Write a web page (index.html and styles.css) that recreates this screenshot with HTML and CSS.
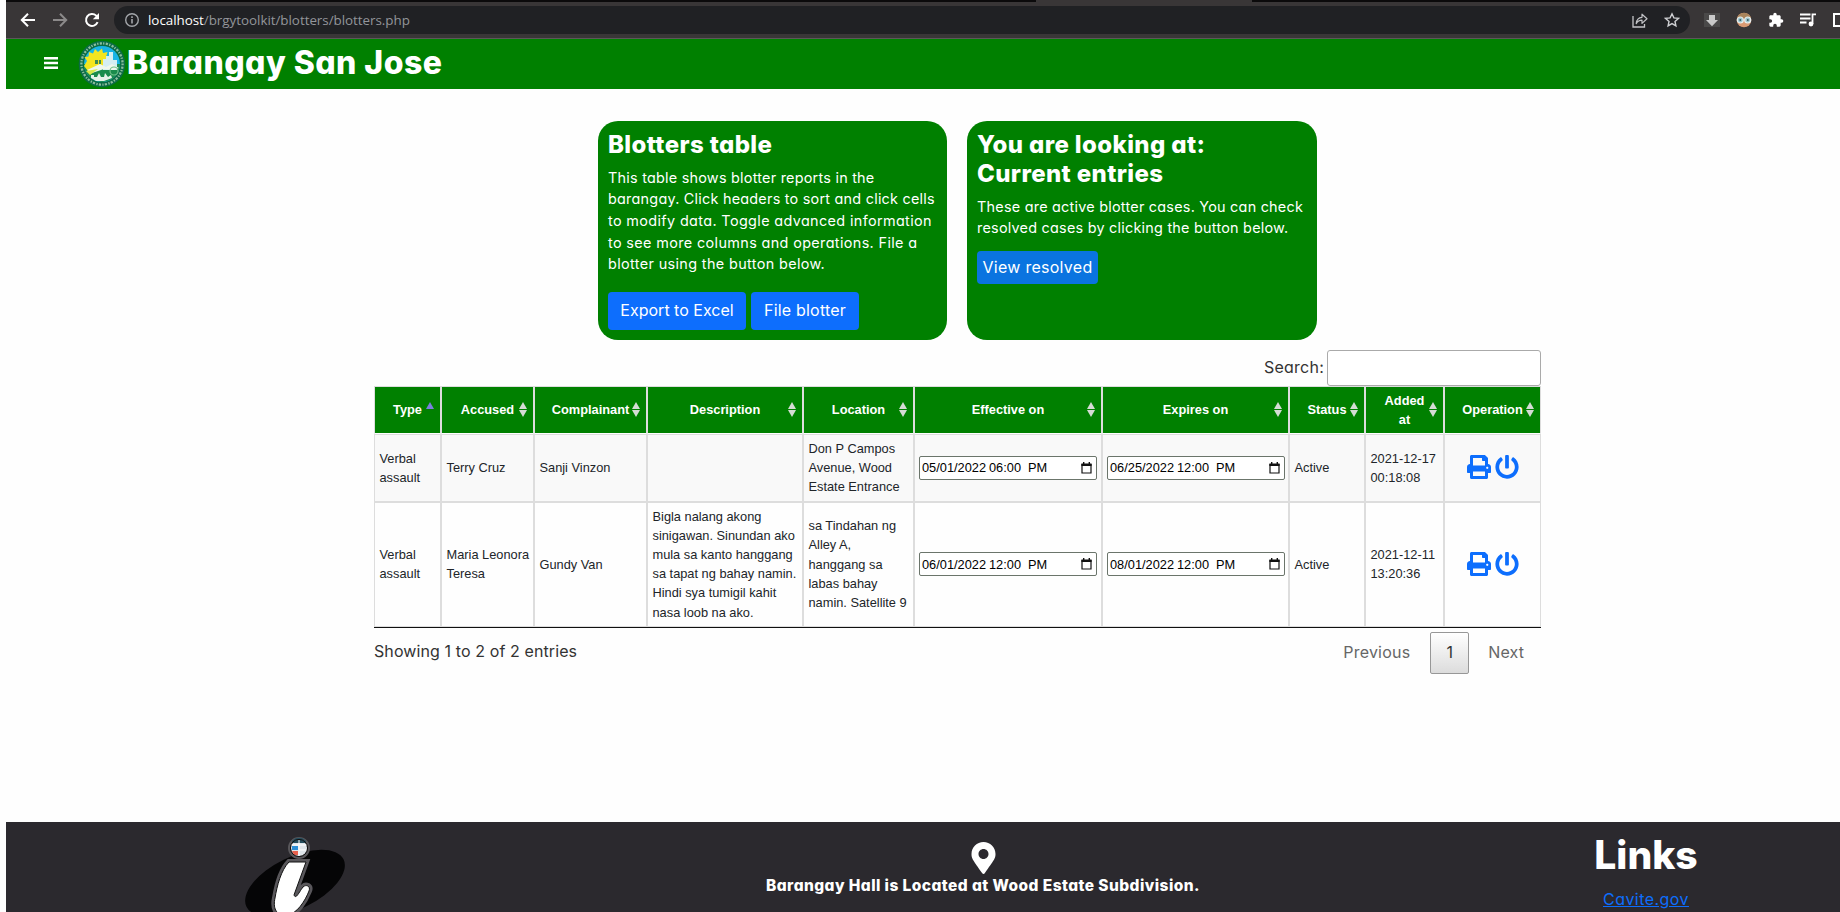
FILE: index.html
```html
<!DOCTYPE html>
<html lang="en">
<head>
<meta charset="utf-8">
<title>Blotters</title>
<link rel="stylesheet" href="styles.css">
</head>
<body>
<div class="window">
  <div class="toolbar">
    <div class="nav-buttons">
      <svg class="ico" viewBox="0 0 16 16"><path d="M15 8H2M8 1.800 1.800 8 8 14.200" fill="none" stroke="#fff" stroke-width="2"/></svg>
      <svg class="ico" viewBox="0 0 16 16"><path d="M1 8h13M8 1.800 14.200 8 8 14.200" fill="none" stroke="#8c8a8a" stroke-width="2"/></svg>
      <svg class="ico" viewBox="0 0 16 16"><path d="M13.600 10.200A6 6 0 1 1 12.200 3.600L13.400 4.800" fill="none" stroke="#fff" stroke-width="2"/><path d="M15 1v6.200H8.800z" fill="#fff"/></svg>
    </div>
    <div class="address">
      <svg class="ico info" viewBox="0 0 16 16"><circle cx="8" cy="8" r="6.300" fill="none" stroke="#a3a6aa" stroke-width="1.400"/><path d="M8 7v4.400M8 4.300v1.600" stroke="#a3a6aa" stroke-width="1.600"/></svg>
      <span class="url"><span class="host">localhost</span>/brgytoolkit/blotters/blotters.php</span>
      <svg class="ico share" viewBox="0 0 16 16"><path d="M1 4v11h11.500v-3" fill="none" stroke="#c3c4c7" stroke-width="1.300"/><path d="M4.200 11.600C4.600 7.400 7 5.500 10 5.300V2.200l5 4.600-5 4.600V8.200C7.500 8.200 5.600 9.200 4.200 11.600z" fill="none" stroke="#c3c4c7" stroke-width="1.200" stroke-linejoin="round"/></svg>
      <svg class="ico" viewBox="0 0 16 16"><path d="m8 1.800 1.900 4.100 4.500.5-3.400 3 .9 4.400L8 11.600l-3.900 2.200.9-4.400-3.400-3 4.500-.5z" fill="none" stroke="#d0d1d4" stroke-width="1.400"/></svg>
    </div>
    <div class="extensions">
      <svg class="ico" viewBox="0 0 16 16"><path d="M0 1h16v14H0z" fill="#4a4949"/><path d="M5 3h6v5h3l-6 6.200L2 8h3z" fill="#c9c9c9"/></svg>
      <svg class="ico" viewBox="0 0 16 16"><circle cx="8" cy="8" r="7.300" fill="#d99a73"/><path d="M1 6.500a7.200 7.200 0 0 1 14 0z" fill="#a8845c"/><circle cx="4.300" cy="8" r="3" fill="#9cc6ce" stroke="#e8eeee" stroke-width="1.200"/><circle cx="11.700" cy="8" r="3" fill="#9cc6ce" stroke="#e8eeee" stroke-width="1.200"/><path d="M3.500 8h1.600M11 8h1.600" stroke="#28464f" stroke-width="1.400"/></svg>
      <svg class="ico" viewBox="0 0 24 24"><path fill="#fff" d="M20.500 11H19V7c0-1.100-.9-2-2-2h-4V3.500a2.500 2.500 0 0 0-5 0V5H4c-1.100 0-2 .9-2 2v3.800h1.500a2.700 2.700 0 0 1 0 5.400H2V20c0 1.100.9 2 2 2h3.800v-1.500a2.700 2.700 0 0 1 5.400 0V22H17c1.100 0 2-.9 2-2v-4h1.500a2.500 2.500 0 0 0 0-5z"/></svg>
      <svg class="ico" viewBox="0 0 16 16"><path d="M0 2.500h10.500M0 6.500h10.500M0 10.500h6.500M12.500 12V2.300H16" fill="none" stroke="#fff" stroke-width="1.800"/><circle cx="11" cy="12" r="2.400" fill="#fff"/></svg>
      <svg class="ico" viewBox="0 0 16 16"><path d="M2 2h13v12H2z" fill="none" stroke="#fff" stroke-width="2"/></svg>
    </div>
  </div>

  <header class="site-header">
    <svg class="burger" viewBox="0 0 14 12"><path d="M0 1.200h14M0 6h14M0 10.800h14" stroke="#fff" stroke-width="2.400"/></svg>
    <svg class="seal" viewBox="0 0 48 48">
      <circle cx="24" cy="24" r="23.300" fill="#0b6b45"/>
      <circle cx="24" cy="24" r="20.600" fill="none" stroke="#8dbd9c" stroke-width="2.300" stroke-dasharray="1.300 1.400 2.200 1.200"/>
      <circle cx="24" cy="24" r="18" fill="#18b4e6"/>
      <path d="M6 24a18 18 0 0 0 36 0z" fill="#1a8c4c"/>
      <path d="M6 26 9 21l-2.500-4 4-.5L11 12l4 1.500L17 9l3 3 4-3.500 1 4.500 4.500-1L28 17l3 4-7 8-14 2z" fill="#f4e51f"/>
      <path d="M25 19h3v-3h3v-4h4v8h4v10H25z" fill="#d4eef2"/>
      <path d="M17 20h3v4h-3zM21 20h2v4h-2z" fill="#3c8b55"/>
      <path d="m9 30 13-6 6 3 6-3 7 4-5 2-10-1-12 4z" fill="#eef7ec"/>
      <path d="m8 31 12-2-8 6z" fill="#d7e84a"/>
      <path d="M13 38v-3h3v2h3l2-4 2 4h3l1-4 3 4 3-2 1 3-8 3H18z" fill="#e6f2e8"/>
      <circle cx="36" cy="31" r="4" fill="none" stroke="#6fbf87" stroke-width="1.200"/>
    </svg>
    <h1 class="site-title">Barangay San Jose</h1>
  </header>

  <main class="content">
    <section class="cards">
      <article class="card">
        <h2>Blotters table</h2>
        <p>This table shows blotter reports in the<br>barangay. Click headers to sort and click cells<br><span class="loose">to modify data. Toggle advanced information<br>to see more columns and operations. File a<br>blotter using the button below.</span></p>
        <div class="actions"><a class="btn btn-export">Export to Excel</a><a class="btn btn-file">File blotter</a></div>
      </article>
      <article class="card card-entries">
        <h2>You are looking at:<br>Current entries</h2>
        <p>These are active blotter cases. You can check<br>resolved cases by clicking the button below.</p>
        <a class="btn btn-view">View resolved</a>
      </article>
    </section>

    <section class="listing">
      <div class="search"><label>Search:</label><div class="search-box"></div></div>
      <table class="grid">
        <colgroup><col class="c-type"><col class="c-accused"><col class="c-complainant"><col class="c-desc"><col class="c-loc"><col class="c-eff"><col class="c-exp"><col class="c-status"><col class="c-added"><col class="c-op"></colgroup>
        <thead><tr>
          <th class="asc">Type</th><th>Accused</th><th>Complainant</th><th>Description</th><th>Location</th><th>Effective on</th><th>Expires on</th><th>Status</th><th>Added at</th><th>Operation</th>
        </tr></thead>
        <tbody>
        <tr class="odd">
          <td>Verbal<br>assault</td><td>Terry Cruz</td><td>Sanji Vinzon</td><td></td><td>Don P Campos<br>Avenue, Wood<br>Estate Entrance</td>
          <td><div class="date"><span class="day">05/01/2022</span><span class="time">06:00</span><span>PM</span><svg class="cal" viewBox="0 0 11 12"><path d="M1 2.500h9v8.500H1z" fill="none" stroke="#111" stroke-width="1.200"/><path d="M.4 1.500h10.200V4H.4zM2 0h1.400v2H2zM7.600 0H9v2H7.600z" fill="#111"/></svg></div></td>
          <td><div class="date"><span class="day">06/25/2022</span><span class="time">12:00</span><span>PM</span><svg class="cal" viewBox="0 0 11 12"><path d="M1 2.500h9v8.500H1z" fill="none" stroke="#111" stroke-width="1.200"/><path d="M.4 1.500h10.200V4H.4zM2 0h1.400v2H2zM7.600 0H9v2H7.600z" fill="#111"/></svg></div></td>
          <td>Active</td><td>2021-12-17<br>00:18:08</td>
          <td><div class="ops"><svg viewBox="0 0 512 512"><path d="M448 192V77.250c0-8.490-3.370-16.620-9.370-22.630L393.370 9.370c-6-6-14.140-9.370-22.630-9.370H96C78.330 0 64 14.330 64 32v160c-35.350 0-64 28.650-64 64v112c0 8.840 7.160 16 16 16h48v96c0 17.670 14.330 32 32 32h320c17.670 0 32-14.330 32-32v-96h48c8.840 0 16-7.160 16-16V256c0-35.350-28.650-64-64-64zm-64 256H128v-96h256v96zm0-224H128V64h192v48c0 8.840 7.160 16 16 16h48v96zm48 72c-13.250 0-24-10.750-24-24 0-13.260 10.750-24 24-24s24 10.740 24 24c0 13.250-10.750 24-24 24z"/></svg><svg viewBox="0 0 512 512"><path d="M400 54.100c63 45 104 118.600 104 201.900 0 136.800-110.800 247.700-247.500 248C120 504.300 8.200 393 8 256.400 7.900 173.100 48.900 99.300 111.800 54.200c11.700-8.300 28-4.800 35 7.700L162.600 90c5.900 10.500 3.100 23.800-6.600 31-41.500 30.800-68 79.600-68 134.900-.1 92.300 74.500 168.100 168 168.100 91.600 0 168.600-74.200 168-169.100-.3-51.800-24.700-101.800-68.100-134-9.700-7.200-12.400-20.500-6.500-30.900l15.800-28.100c7-12.400 23.200-16.100 34.800-7.800zM296 264V24c0-13.300-10.700-24-24-24h-32c-13.300 0-24 10.700-24 24v240c0 13.300 10.700 24 24 24h32c13.300 0 24-10.700 24-24z"/></svg></div></td>
        </tr>
        <tr>
          <td>Verbal<br>assault</td><td>Maria Leonora<br>Teresa</td><td>Gundy Van</td><td>Bigla nalang akong<br>sinigawan. Sinundan ako<br>mula sa kanto hanggang<br>sa tapat ng bahay namin.<br>Hindi sya tumigil kahit<br>nasa loob na ako.</td><td>sa Tindahan ng<br>Alley A,<br>hanggang sa<br>labas bahay<br>namin. Satellite 9</td>
          <td><div class="date"><span class="day">06/01/2022</span><span class="time">12:00</span><span>PM</span><svg class="cal" viewBox="0 0 11 12"><path d="M1 2.500h9v8.500H1z" fill="none" stroke="#111" stroke-width="1.200"/><path d="M.4 1.500h10.200V4H.4zM2 0h1.400v2H2zM7.600 0H9v2H7.600z" fill="#111"/></svg></div></td>
          <td><div class="date"><span class="day">08/01/2022</span><span class="time">12:00</span><span>PM</span><svg class="cal" viewBox="0 0 11 12"><path d="M1 2.500h9v8.500H1z" fill="none" stroke="#111" stroke-width="1.200"/><path d="M.4 1.500h10.200V4H.4zM2 0h1.400v2H2zM7.600 0H9v2H7.600z" fill="#111"/></svg></div></td>
          <td>Active</td><td>2021-12-11<br>13:20:36</td>
          <td><div class="ops"><svg viewBox="0 0 512 512"><path d="M448 192V77.250c0-8.490-3.370-16.620-9.370-22.630L393.370 9.370c-6-6-14.140-9.370-22.630-9.370H96C78.330 0 64 14.330 64 32v160c-35.350 0-64 28.650-64 64v112c0 8.840 7.160 16 16 16h48v96c0 17.670 14.330 32 32 32h320c17.670 0 32-14.330 32-32v-96h48c8.840 0 16-7.160 16-16V256c0-35.350-28.650-64-64-64zm-64 256H128v-96h256v96zm0-224H128V64h192v48c0 8.840 7.160 16 16 16h48v96zm48 72c-13.250 0-24-10.750-24-24 0-13.260 10.750-24 24-24s24 10.740 24 24c0 13.250-10.750 24-24 24z"/></svg><svg viewBox="0 0 512 512"><path d="M400 54.100c63 45 104 118.600 104 201.900 0 136.800-110.800 247.700-247.500 248C120 504.300 8.200 393 8 256.400 7.900 173.100 48.900 99.300 111.800 54.200c11.700-8.300 28-4.800 35 7.700L162.600 90c5.900 10.500 3.100 23.800-6.600 31-41.500 30.800-68 79.600-68 134.900-.1 92.300 74.500 168.100 168 168.100 91.600 0 168.600-74.200 168-169.100-.3-51.800-24.700-101.800-68.100-134-9.700-7.200-12.400-20.500-6.500-30.900l15.800-28.100c7-12.400 23.200-16.100 34.800-7.800zM296 264V24c0-13.300-10.700-24-24-24h-32c-13.300 0-24 10.700-24 24v240c0 13.300 10.700 24 24 24h32c13.300 0 24-10.700 24-24z"/></svg></div></td>
        </tr>
        </tbody>
      </table>
      <div class="table-footer">
        <div class="info-text">Showing 1 to 2 of 2 entries</div>
        <div class="pager"><span class="prev">Previous</span><span class="page-current">1</span><span class="next">Next</span></div>
      </div>
    </section>
  </main>

  <footer class="site-footer">
    <svg class="mark" viewBox="0 0 102 78">
      <ellipse cx="51" cy="49" rx="54" ry="26" transform="rotate(-26 51 49)" fill="#050506"/>
      <path d="M45 28h17L50 61c2 5 5-3 9-8 3-3 8-1 6 4-4 10-12 23-22 24-12 1-14-8-12-17 2-12 6-28 14-36z" fill="#fff" stroke="#59575b" stroke-width="6"/>
      <path d="M45 28h17L50 61c2 5 5-3 9-8 3-3 8-1 6 4-4 10-12 23-22 24-12 1-14-8-12-17 2-12 6-28 14-36z" fill="#fff" stroke="#111" stroke-width="1"/>
      <circle cx="55" cy="14" r="9.500" fill="#dfe5ea" stroke="#59575b" stroke-width="3"/>
      <path d="M48 7a9 9 0 0 1 14 0v2H48z" fill="#244c5c"/><path d="M48 12h6v4h-6z" fill="#2c8ed6"/><path d="M48 17h6v4h-4z" fill="#e8604c"/><path d="M55 6v16M47 11h16M55 16h8" stroke="#fff" stroke-width="1"/>
      <circle cx="55" cy="14" r="8.600" fill="none" stroke="#111" stroke-width="1"/>
    </svg>
    <div class="place">
      <svg class="pin" viewBox="0 0 384 512"><path fill="#fff" fill-rule="evenodd" d="M172.268 501.670C26.970 291.031 0 269.413 0 192 0 85.961 85.961 0 192 0s192 85.961 192 192c0 77.413-26.970 99.031-172.268 309.670-9.535 13.774-29.930 13.773-39.464 0zM192 272c44.183 0 80-35.817 80-80s-35.817-80-80-80-80 35.817-80 80 35.817 80 80 80z"/></svg>
      <strong>Barangay Hall is Located at Wood Estate Subdivision.</strong>
    </div>
    <div class="links"><h2>Links</h2><a>Cavite.gov</a></div>
  </footer>
</div>
</body>
</html>
```
FILE: styles.css
```css
* { box-sizing: border-box; }
body { margin: 0; background: #fefefe; color: #212529; font-family: Inter, "Open Sans", sans-serif; font-feature-settings: "cv11"; overflow: hidden; }
h1, h2, p { margin: 0; }
.window { margin-left: 6px; height: 912px; display: flex; flex-direction: column; white-space: nowrap; overflow: hidden; }

.toolbar { flex: none; height: 39px; border-bottom: 1px solid #5c585a; background: linear-gradient(90deg, #0b0a0b 1030px, #393637 1030px 1246px, #0b0a0b 1246px) 0 0 / 100% 2px no-repeat, #393637; display: flex; align-items: center; padding-top: 2px; }
.ico { width: 16px; height: 16px; flex: none; display: block; }
.nav-buttons { flex: none; display: flex; gap: 16px; padding-left: 14px; width: 108px; }
.address { flex: none; width: 1576px; height: 28px; border-radius: 14px; background: #202124; display: flex; align-items: center; padding: 0 10px 0 10px; }
.url { margin-left: 8px; flex: 1; font: 13.400px/18px "Open Sans", sans-serif; letter-spacing: -0.030px; color: #93959a; }
.host { color: #fff; }
.share { margin-right: 16px; }
.extensions { flex: none; display: flex; gap: 16px; padding-left: 14px; }

.site-header { flex: none; height: 50px; background: green; display: flex; align-items: center; padding-left: 38px; }
.burger { width: 14px; height: 12px; margin: -2px 20px 0 0; }
.seal { width: 48px; height: 48px; }
.site-title { font-size: 32px; font-weight: 800; line-height: 48px; letter-spacing: 0.450px; color: #fff; margin: -2px 0 0 1px; }

.content { flex: none; height: 733px; padding-top: 32px; }
.cards { display: flex; gap: 20px; padding-left: 592px; }
.card { width: 349px; height: 219px; border-radius: 20px; background: green; color: #fff; padding: 10px; }
.card-entries { width: 350px; }
.card h2 { font-size: 24px; line-height: 28.800px; font-weight: 800; letter-spacing: 0.380px; margin-bottom: 7px; }
.card p { font-size: 14.400px; line-height: 21.600px; font-weight: 430; letter-spacing: 0.240px; }
.loose { letter-spacing: 0.370px; }
.actions { display: flex; gap: 5px; margin-top: 17px; }
.btn { display: flex; align-items: center; justify-content: center; border-radius: 4px; background: #0d6efd; font-size: 16px; height: 38px; padding-bottom: 1px; color: #fff; }
.btn-export { width: 138px; }
.btn-file { width: 108px; letter-spacing: 0.200px; }
.btn-view { width: 121px; height: 33px; margin-top: 12px; letter-spacing: 0.270px; background: #0a74e0; }

.listing { width: 1167px; margin: 10px 0 0 368px; color: #333; }
.search { display: flex; justify-content: flex-end; align-items: flex-start; height: 35.500px; font-size: 16px; line-height: 34px; letter-spacing: 0.230px; }
.search label { margin-right: 3px; }
.search-box { width: 214px; height: 35.500px; border: 1px solid #aaa; border-radius: 3px; background: #fff; }

.grid { width: 1167px; table-layout: fixed; border-collapse: separate; border-spacing: 0; border-bottom: 1px solid #111; font: 12.800px/19.200px "Liberation Sans", Arial, sans-serif; color: #212529; }
.c-type { width: 67px; } .c-accused { width: 93px; } .c-complainant { width: 113px; } .c-desc { width: 156px; } .c-loc { width: 111px; }
.c-eff { width: 188px; } .c-exp { width: 187px; } .c-status { width: 76px; } .c-added { width: 79px; } .c-op { width: 97px; }
.grid th { position: relative; height: 48px; padding: 4px 15px; border: 1px solid #ddd; border-bottom-color: #fff; background: green; background-clip: padding-box; color: #fff; white-space: normal; vertical-align: middle; }
.grid th::before, .grid th::after { content: ""; position: absolute; right: 6px; border: 4.500px solid transparent; }
.grid th::before { top: 15px; border-top: 0; border-bottom: 7px solid #d5dcd5; }
.grid th::after { top: 23px; border-bottom: 0; border-top: 7px solid #d5dcd5; }
.grid th.asc::before { border-bottom-color: #7b7fe0; }
.grid th.asc::after { display: none; }
.grid td { padding: 4px 3.500px 4px 4.500px; border: 1px solid #ddd; vertical-align: middle; }
.grid .odd td { background: #f9f9f9; }
.date { width: 177.500px; height: 24px; margin-left: -0.500px; border: 1px solid #6b756b; border-radius: 2px; background: #fff; color: #000; display: flex; align-items: center; padding: 0 4px 0 2px; }
.day { width: 67px; }
.time { width: 39px; }
.cal { width: 11px; height: 12px; margin-left: auto; }
.ops { display: flex; justify-content: center; gap: 4px; margin-top: -1px; }
.ops svg { width: 24px; height: 24px; fill: #0d6efd; }

.table-footer { display: flex; justify-content: space-between; font-size: 16px; letter-spacing: 0.100px; }
.info-text { padding-top: 13px; line-height: 20px; }
.pager { display: flex; align-items: center; height: 42px; margin-top: 4px; color: #666; line-height: 38px; }
.prev { letter-spacing: 0.200px; padding-bottom: 2px; }
.page-current { width: 39px; height: 42px; text-align: center; margin: 0 19px 0 20px; border: 1px solid #979797; border-radius: 2px; background: linear-gradient(#fff, #dcdcdc); color: #333; }
.next { margin-right: 17px; padding-bottom: 2px; }

.site-footer { flex: none; height: 90px; background: #2b292e; color: #fff; display: flex; align-items: flex-start; overflow: hidden; }
.mark { flex: none; width: 102px; height: 78px; margin: 12px 0 0 238px; }
.place { flex: none; width: 434px; margin: 20px 0 0 420px; display: flex; flex-direction: column; align-items: center; }
.pin { width: 25px; height: 32px; }
.place strong { font-size: 15.500px; line-height: 20px; font-weight: 800; letter-spacing: 0.440px; margin-top: 2px; }
.links { flex: none; width: 104px; margin: 8px 0 0 394px; display: flex; flex-direction: column; align-items: center; }
.links h2 { font-size: 39px; line-height: 52px; font-weight: 800; margin-top: -1px; }
.links a { font-size: 16px; line-height: 20px; letter-spacing: 0.450px; margin-top: 8px; color: #0d6efd; text-decoration: underline; }
```
